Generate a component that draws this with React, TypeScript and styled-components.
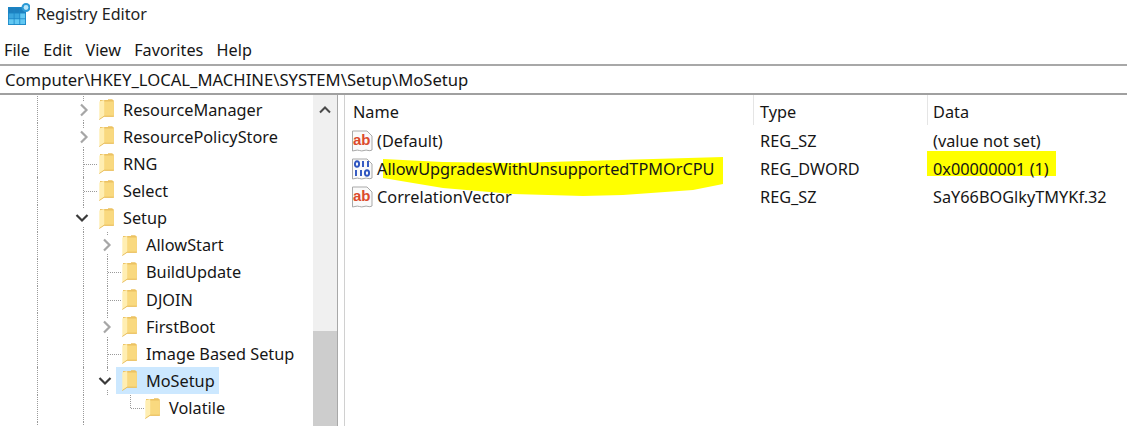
import React from "react";
import styled, { createGlobalStyle } from "styled-components";

const Global = createGlobalStyle`
  html, body { margin: 0; padding: 0; background: #fff; }
  body { font-family: "Noto Sans", "Open Sans", Arial, sans-serif; color: #161616; }
`;

const Window = styled.div`
  width: 1127px; height: 426px; overflow: hidden; display: flex; flex-direction: column; background: #fff;
  font-size: 16.3px;
`;
const TitleBar = styled.div`
  height: 28px; display: flex; align-items: center; gap: 6px; padding-left: 8px; font-size: 16.1px; color: #222;
`;
const MenuBar = styled.div`
  height: 36px; display: flex; align-items: center; gap: 13.3px; padding: 8px 0 0 4px; box-sizing: border-box; font-size: 16.2px;
`;
const AddressBar = styled.div`
  height: 31px; box-sizing: border-box; border-top: 2px solid #a8a8a8; border-bottom: 2px solid #a0a0a0;
  display: flex; align-items: center; padding-left: 5px; font-size: 16.65px;
`;
const Main = styled.div`
  flex: 1; display: grid; grid-template-columns: 313px 24px 8px 1fr; min-height: 0;
`;
const Tree = styled.div`
  position: relative; overflow: hidden; padding-top: 1px;
`;
const Row = styled.div<{ $indent: number }>`
  position: relative; height: 27.15px; display: flex; align-items: center; padding-left: ${p => 73 + p.$indent * 23}px;
`;
const Guide = styled.span<{ $x: number; $half?: boolean }>`
  position: absolute; left: ${p => p.$x}px; top: 0; bottom: ${p => (p.$half ? "50%" : "0")}; border-left: 1px dotted #9a9a9a;
`;
const Branch = styled.span<{ $x: number }>`
  position: absolute; left: ${p => p.$x}px; top: 50%; width: 13px; border-top: 1px dotted #9a9a9a;
`;
const Toggle = styled.span<{ $filled: boolean }>`
  width: 22px; height: 18px; display: flex; align-items: center; justify-content: center; position: relative; z-index: 1;
  background: ${p => (p.$filled ? "#fff" : "transparent")};
`;
const OpenChevron = styled.svg`
  margin-right: 4px;
`;
const Node = styled.div<{ $selected?: boolean }>`
  height: 27px; display: flex; align-items: center; margin-left: -2px; padding: 0 4px 0 6px; gap: 9px; position: relative; z-index: 1;
  background: ${p => (p.$selected ? "#cce8ff" : "transparent")};
`;
const Label = styled.span`
  white-space: nowrap;
`;
const Scrollbar = styled.div`
  background: #f0f0f0; display: flex; flex-direction: column; align-items: center;
`;
const ScrollUp = styled.div`
  height: 30px; display: flex; align-items: center; justify-content: center;
`;
const Thumb = styled.div`
  width: 100%; margin-top: 206px; flex: 1; background: #cdcdcd;
`;
const Splitter = styled.div`
  border-left: 1px solid #a8a8a8; border-right: 1px solid #d0d0d0; background: #fff;
`;
const ListPane = styled.div`
  position: relative; display: flex; flex-direction: column; padding-left: 2px;
`;
const Header = styled.div`
  height: 32px; display: grid; grid-template-columns: 407px 174px 1fr; align-items: stretch;
`;
const HeaderCell = styled.div<{ $pad: number }>`
  display: flex; align-items: center; padding: 4px 0 0 ${p => p.$pad}px; height: 30px; box-sizing: border-box;
  border-right: 1px solid #e5e5e5;
  &:last-child { border-right: none; }
`;
const ValueRow = styled.div`
  position: relative; height: 28px; display: grid; grid-template-columns: 407px 174px 1fr; align-items: center;
  white-space: nowrap;
`;
const NameCell = styled.div`
  display: flex; align-items: center; gap: 3px; padding-left: 4px; position: relative; z-index: 1;
`;
const PlainCell = styled.div<{ $pad: number }>`
  padding-left: ${p => p.$pad}px; position: relative; z-index: 1;
`;
const DataHighlight = styled.div`
  position: absolute; left: 580px; top: -4px; width: 129px; height: 25px; background: #ffff00;
`;
const Marker = styled.svg`
  position: absolute; left: 38px; top: 62px;
`;

const Chevron = ({ open }: { open?: boolean }) =>
  open ? (
    <OpenChevron width="14" height="10" viewBox="0 0 14 10"><path d="M1.5 2 L7 7.5 L12.5 2" fill="none" stroke="#3a3a3a" strokeWidth="2.2" /></OpenChevron>
  ) : (
    <svg width="10" height="14" viewBox="0 0 10 14"><path d="M2 1.5 L7.5 7 L2 12.5" fill="none" stroke="#a6a6a6" strokeWidth="2.2" /></svg>
  );

const Folder = () => (
  <svg width="15" height="21" viewBox="0 0 15 21" style={{ flex: "none" }}>
    <path d="M1 1 L9 1 L9 0.3 L13 0.3 L14.8 1.5 L14.8 17.5 L1 17.5 Z" fill="#ecc262" />
    <path d="M5 2.5 L14.8 2.5 L14.8 17.5 L5 17.5 Z" fill="#f9d97f" />
    <path d="M0.3 20.5 L0.3 2.5 L5.2 1 L5.2 17 Z" fill="#ffeeb2" />
    <path d="M0.3 20.5 L5.2 17.2 L14.8 17.2" fill="none" stroke="#e8bd5c" strokeWidth="1" />
  </svg>
);

const AppIcon = () => (
  <svg width="22" height="24" viewBox="0 0 22 24">
    <rect x="0" y="5" width="18" height="18" fill="#1b86c6" />
    {[0, 1, 2].map(r =>
      [0, 1, 2].map(c => (
        <rect key={`${r}${c}`} x={0.8 + c * 5.7} y={5.8 + r * 5.7} width="4.9" height="4.9"
          fill={r === 2 || (r === 1 && c === 2) ? "#62c8f2" : r === 0 ? "#1d7fbe" : "#3aa6de"} />
      ))
    )}
    <circle cx="18" cy="5.5" r="4.5" fill="#2b9ad6" />
    <circle cx="18" cy="5.5" r="2.4" fill="#b9e6fa" />
  </svg>
);

const SheetShape = () => (
  <path d="M1.5 1 L16 1 L21 6 L21 20 C 18 22 16 19 13 20.5 C 10 22 7 19 4 20.5 L1.5 21 Z" fill="#fafafa" stroke="#a9a9a9" strokeWidth="1" />
);
const StringIcon = () => (
  <svg width="23" height="23" viewBox="0 0 23 23" style={{ flex: "none" }}>
    <SheetShape />
    <text x="2" y="14.5" fontFamily="'Liberation Sans', sans-serif" fontWeight="700" fontSize="15" fill="#dc4a2c">ab</text>
  </svg>
);
const BinaryIcon = () => (
  <svg width="23" height="23" viewBox="0 0 23 23" style={{ flex: "none" }}>
    <SheetShape />
    <g fill="none" stroke="#2f55c0" strokeWidth="1.9">
      <ellipse cx="6" cy="6" rx="2.1" ry="2.8" />
      <path d="M12 3 V9 M17 3 V9" />
      <path d="M5 12 V18 M10 12 V18" />
      <ellipse cx="16" cy="15" rx="2.1" ry="2.8" />
    </g>
  </svg>
);

type TreeItem = {
  name: string; indent: number; toggle?: "open" | "closed"; selected?: boolean;
  guides: number[]; half?: number; branch?: number;
};
const items: TreeItem[] = [
  { name: "ResourceManager", indent: 0, toggle: "closed", guides: [37, 83] },
  { name: "ResourcePolicyStore", indent: 0, toggle: "closed", guides: [37, 83] },
  { name: "RNG", indent: 0, guides: [37, 83], branch: 84 },
  { name: "Select", indent: 0, guides: [37, 83], branch: 84 },
  { name: "Setup", indent: 0, toggle: "open", guides: [37, 83] },
  { name: "AllowStart", indent: 1, toggle: "closed", guides: [37, 83, 107] },
  { name: "BuildUpdate", indent: 1, guides: [37, 83, 107], branch: 108 },
  { name: "DJOIN", indent: 1, guides: [37, 83, 107], branch: 108 },
  { name: "FirstBoot", indent: 1, toggle: "closed", guides: [37, 83, 107] },
  { name: "Image Based Setup", indent: 1, guides: [37, 83, 107], branch: 108 },
  { name: "MoSetup", indent: 1, toggle: "open", selected: true, guides: [37, 83, 107] },
  { name: "Volatile", indent: 2, guides: [37, 83], half: 130, branch: 131 },
  { name: "", indent: 1, guides: [37, 83] },
];

const values = [
  { icon: <StringIcon />, name: "(Default)", type: "REG_SZ", data: "(value not set)" },
  { icon: <BinaryIcon />, name: "AllowUpgradesWithUnsupportedTPMOrCPU", type: "REG_DWORD", data: "0x00000001 (1)", mark: true },
  { icon: <StringIcon />, name: "CorrelationVector", type: "REG_SZ", data: "SaY66BOGlkyTMYKf.32" },
];

export default function App() {
  return (
    <Window>
      <Global />
      <TitleBar><AppIcon /><span>Registry Editor</span></TitleBar>
      <MenuBar>
        {["File", "Edit", "View", "Favorites", "Help"].map(m => <span key={m}>{m}</span>)}
      </MenuBar>
      <AddressBar>Computer\HKEY_LOCAL_MACHINE\SYSTEM\Setup\MoSetup</AddressBar>
      <Main>
        <Tree>
          {items.map((it, i) => (
            <Row key={i} $indent={it.indent}>
              {it.guides.map(x => <Guide key={x} $x={x} />)}
              {it.half !== undefined && <Guide $x={it.half} $half />}
              {it.branch !== undefined && <Branch $x={it.branch} />}
              <Toggle $filled={!!it.toggle}>{it.toggle && <Chevron open={it.toggle === "open"} />}</Toggle>
              {it.name && (
                <Node $selected={it.selected}>
                  <Folder />
                  <Label>{it.name}</Label>
                </Node>
              )}
            </Row>
          ))}
        </Tree>
        <Scrollbar>
          <ScrollUp>
            <svg width="14" height="10" viewBox="0 0 14 10"><path d="M2 7.5 L7 2.5 L12 7.5" fill="none" stroke="#4a4a4a" strokeWidth="2" /></svg>
          </ScrollUp>
          <Thumb />
        </Scrollbar>
        <Splitter />
        <ListPane>
          <Marker width="345" height="45" viewBox="0 0 345 45">
            <path d="M0 2 L60 5 L130 6 L200 4 L340 0 L340 27 L310 33 L240 38 L200 39 L130 37 L60 31 L0 21 Z" fill="#ffff00" />
          </Marker>
          <Header>
            <HeaderCell $pad={6}>Name</HeaderCell>
            <HeaderCell $pad={6}>Type</HeaderCell>
            <HeaderCell $pad={5}>Data</HeaderCell>
          </Header>
          {values.map(v => (
            <ValueRow key={v.name}>
              {v.mark && <DataHighlight />}
              <NameCell>{v.icon}<span>{v.name}</span></NameCell>
              <PlainCell $pad={6}>{v.type}</PlainCell>
              <PlainCell $pad={5}>{v.data}</PlainCell>
            </ValueRow>
          ))}
        </ListPane>
      </Main>
    </Window>
  );
}
